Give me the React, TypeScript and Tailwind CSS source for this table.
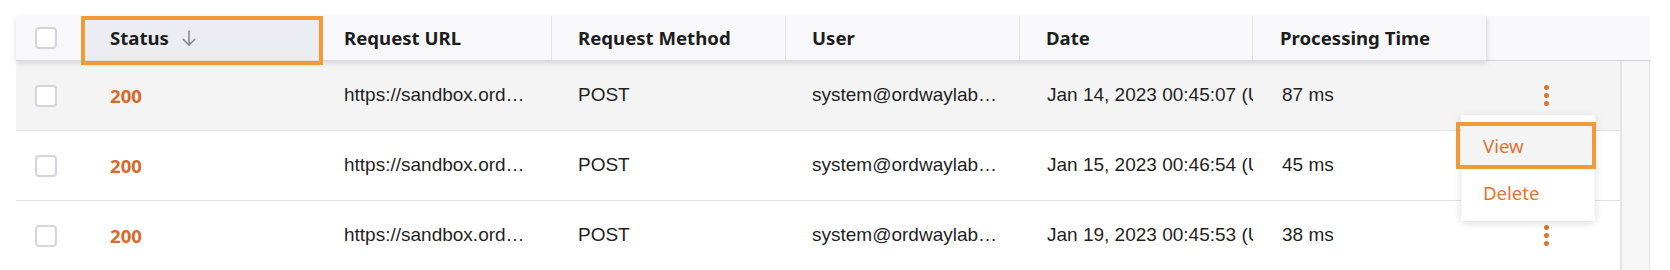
import { useState } from "react";

// 요청 로그 데이터
interface LogRow {
  status: number;
  url: string;
  method: string;
  user: string;
  date: string;
  time: string;
}

const rows: LogRow[] = [
  { status: 200, url: "https://sandbox.ordwaylabs.com/api/v1/customers", method: "POST", user: "system@ordwaylabs.com", date: "Jan 14, 2023 00:45:07 (UTC)", time: "87 ms" },
  { status: 200, url: "https://sandbox.ordwaylabs.com/api/v1/invoices", method: "POST", user: "system@ordwaylabs.com", date: "Jan 15, 2023 00:46:54 (UTC)", time: "45 ms" },
  { status: 200, url: "https://sandbox.ordwaylabs.com/api/v1/payments", method: "POST", user: "system@ordwaylabs.com", date: "Jan 19, 2023 00:45:53 (UTC)", time: "38 ms" },
];

const headFont = { fontFamily: '"Noto Sans", "Open Sans", sans-serif' };
const bodyFont = { fontFamily: '"Liberation Sans", Arial, sans-serif' };

function Box() {
  return <div className="w-[22px] h-[22px] rounded-[4px] border-2 border-[#d5d5de] bg-white" />;
}

function Dots() {
  return (
    <div className="flex flex-col items-center gap-[3px]">
      <span className="w-[5px] h-[5px] rounded-full bg-[#db7330]" />
      <span className="w-[5px] h-[5px] rounded-full bg-[#db7330]" />
      <span className="w-[5px] h-[5px] rounded-full bg-[#db7330]" />
    </div>
  );
}

export default function App() {
  const [hover] = useState(0);

  return (
    <div className="w-[1670px] h-[270px] bg-white pt-4 pl-4 overflow-hidden">
      <div className="w-[1634px] relative">
        {/* 헤더 */}
        <div className="flex h-[45px] text-[18.6px] font-bold text-[#1c1c1c]" style={headFont}>
          <div className="flex relative z-10 shadow-[0_2px_6px_rgba(0,0,0,0.13)] bg-[#f8f8fa] border-b border-[#dadade]">
            <div className="w-[69px] flex items-center pl-[19px]">
              <Box />
            </div>
            <div className="w-[234px] relative flex items-center gap-[10px] pl-[25px] bg-[#ececf3] border-r border-[#e3e3e8]">
              Status
              <svg width="20" height="20" viewBox="0 0 24 24" fill="none" stroke="#85858a" strokeWidth="1.8" strokeLinecap="round" strokeLinejoin="round">
                <path d="M12 3.5v17" />
                <path d="M5 13.5l7 7 7-7" />
              </svg>
              <div className="absolute -left-[4px] -right-[5px] top-0 -bottom-[5px] border-4 border-[#f29a38]" />
            </div>
            <div className="w-[233px] flex items-center pl-[25px] border-r border-[#e3e3e8]">Request URL</div>
            <div className="w-[234px] flex items-center pl-[26px] border-r border-[#e3e3e8]">Request Method</div>
            <div className="w-[234px] flex items-center pl-[26px] border-r border-[#e3e3e8]">User</div>
            <div className="w-[233px] flex items-center pl-[26px] border-r border-[#e3e3e8]">Date</div>
            <div className="w-[234px] flex items-center pl-[27px] border-r border-[#e3e3e8]">Processing Time</div>
          </div>
          <div className="flex-1 bg-[#f9f9fb] border-b border-[#d2d2d6]" />
        </div>

        {/* 본문 */}
        <div className="flex">
          <div className="w-[1606px] border-r-2 border-[#e4e4e4]">
            {rows.map((r, i) => (
              <div
                key={i}
                className={`flex h-[70px] border-b border-[#e0e0e0] text-[19px] text-[#1f1f1f] ${i === hover ? "bg-[#f4f4f4]" : "bg-white"}`}
                style={bodyFont}
              >
                <div className="w-[69px] flex items-center pl-[19px]">
                  <Box />
                </div>
                <div className="w-[234px] flex items-center pl-[25px] text-[18.6px] font-bold text-[#d8692a]" style={headFont}>
                  {r.status}
                </div>
                <div className="w-[233px] flex items-center pl-[25px] pr-[22px]">
                  <span className="truncate">{r.url}</span>
                </div>
                <div className="w-[234px] flex items-center pl-[26px]">{r.method}</div>
                <div className="w-[234px] flex items-center pl-[26px] pr-[20px]">
                  <span className="truncate">{r.user}</span>
                </div>
                <div className="w-[233px] flex items-center pl-[27px] overflow-hidden whitespace-nowrap">{r.date}</div>
                <div className="w-[234px] flex items-center pl-[29px]">{r.time}</div>
                <div className="flex-1 flex items-center pl-[57px]">{i !== 1 && <Dots />}</div>
              </div>
            ))}
          </div>
          <div className="w-[28px] bg-[#f6f6f6] border-r border-[#e6e6e6]" />
        </div>

        {/* 드롭다운 메뉴 */}
        <div
          className="absolute left-[1445px] top-[99px] w-[134px] bg-white shadow-[0_2px_8px_rgba(0,0,0,0.14)] pt-[7px] pb-[5px] text-[18.6px] text-[#dc7436] z-20"
          style={headFont}
        >
          <div className="relative h-[47px] flex items-center pl-[22px] bg-[#f4f4f4]">
            View
            <div className="absolute -left-[5px] -right-[1px] top-0 bottom-0 border-4 border-[#f29a38]" />
          </div>
          <div className="h-[47px] flex items-center pl-[22px]">Delete</div>
        </div>
      </div>
    </div>
  );
}
